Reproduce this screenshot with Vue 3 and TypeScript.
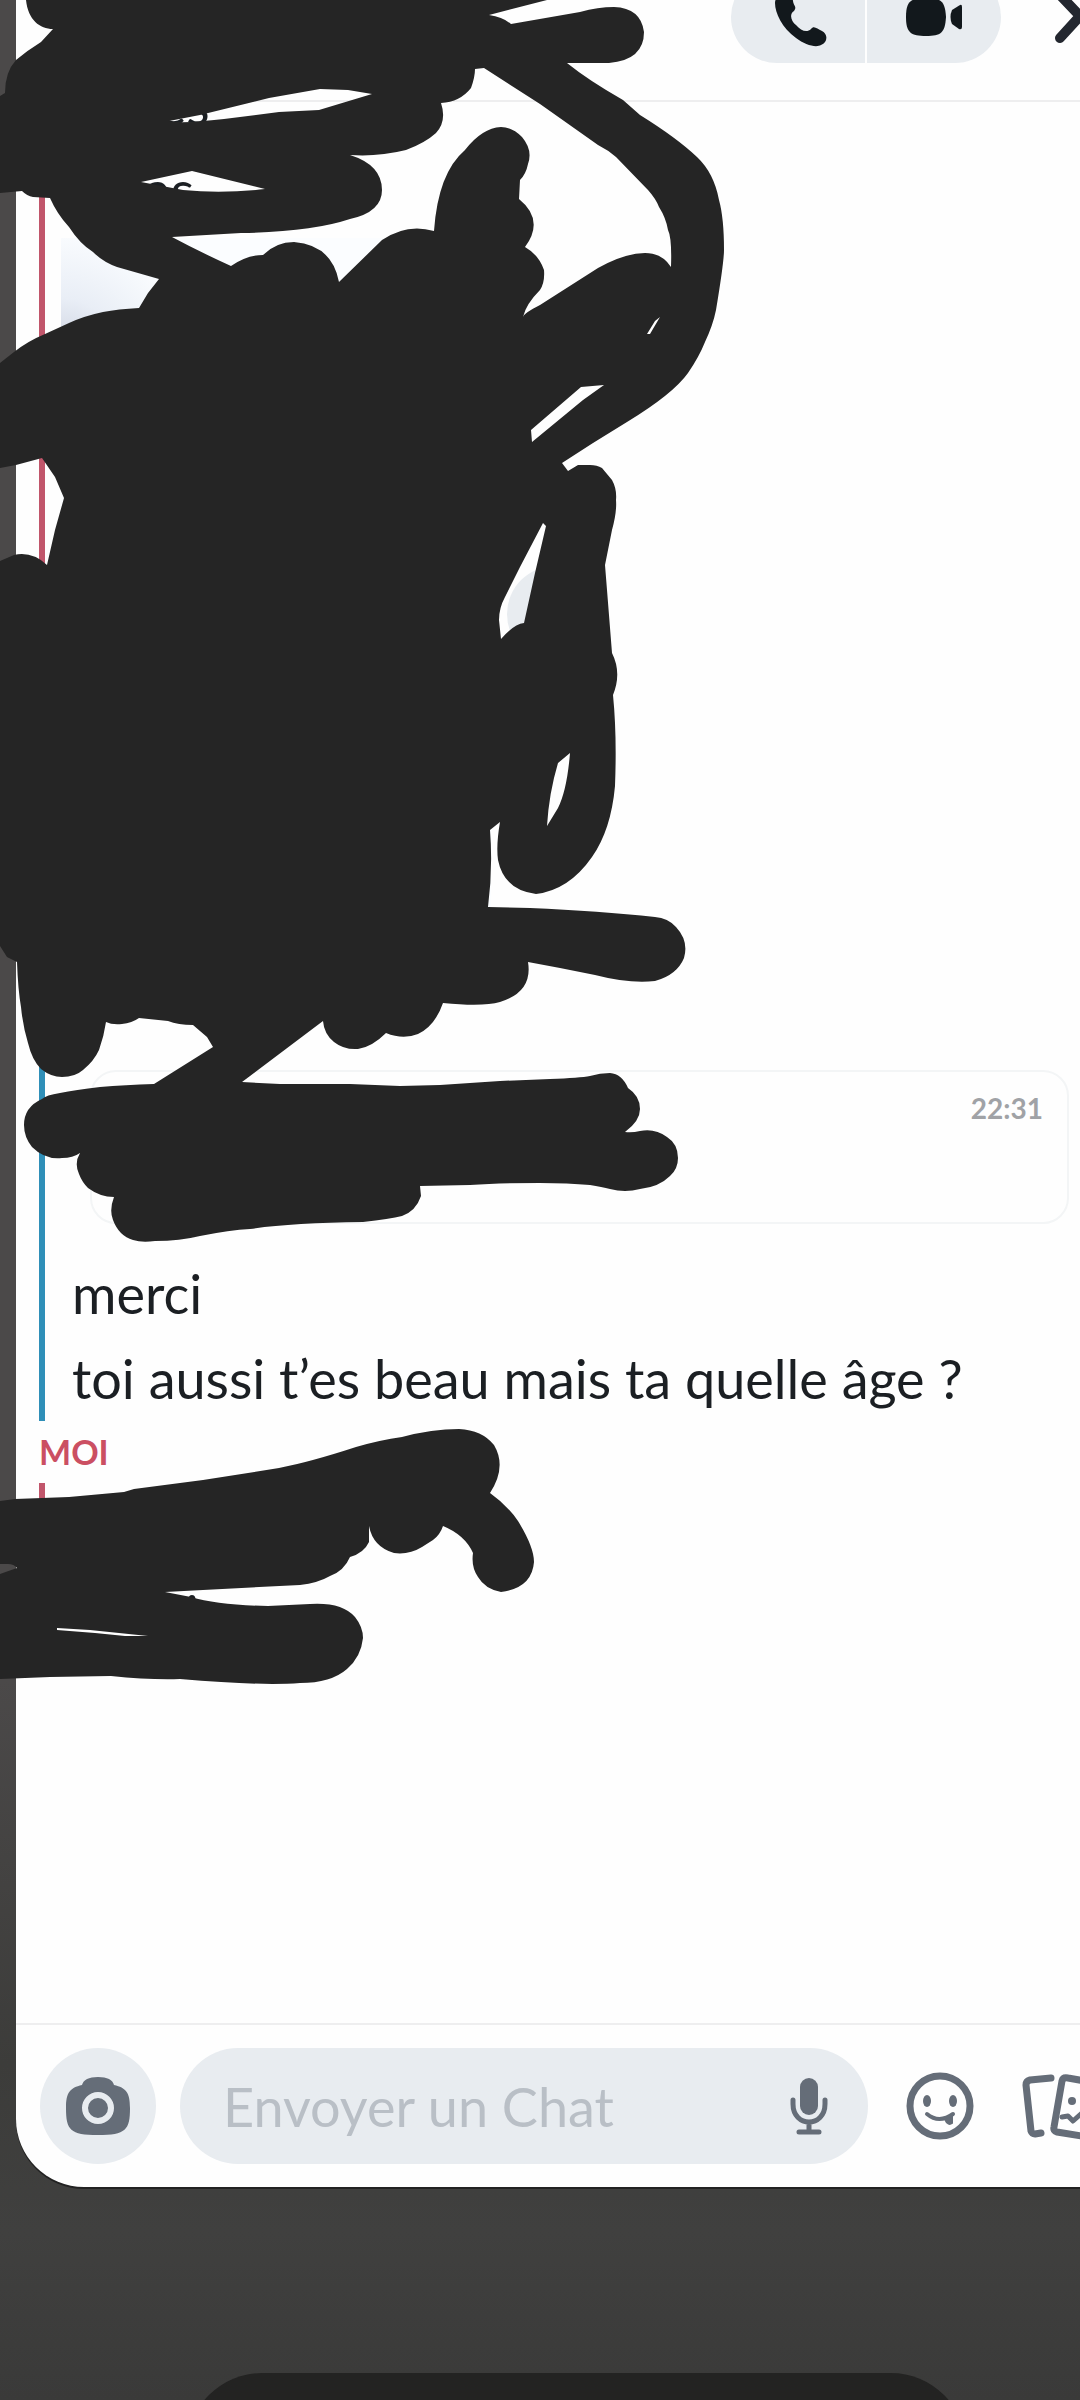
<script setup lang="ts">
import { ref } from 'vue'

const draft = ref('')
const replies: string[] = ['merci', 'toi aussi t’es beau mais ta quelle âge ?']
</script>

<template>
  <div class="screen">
    <main class="sheet">
      <header class="top">
        <div class="calls">
          <button type="button" aria-label="Appel audio">
            <svg width="60" height="60" viewBox="0 0 60 60">
              <path d="M12 8C17 5 24 6 25 14C26 20 29 19 26 24C21 27 23 34 28 38C33 44 39 46 43 42C46 38 49 42 54 44C60 47 60 55 53 58C48 61 37 58 28 51C14 41 7 26 7 16Q7 11 12 8Z" fill="#12181c" />
            </svg>
          </button>
          <button type="button" aria-label="Appel vidéo">
            <svg width="60" height="42" viewBox="0 0 60 42">
              <path d="M22 2C37 2 41 5 42 21C41 37 37 40 22 40C7 40 2 37 2 21C2 5 7 2 22 2Z" fill="#12181c" />
              <path d="M56 9Q58 8 58 11V31Q58 34 55 33L48 28Q45 21 48 14Z" fill="#12181c" />
            </svg>
          </button>
        </div>
        <button class="more" type="button" aria-label="Ouvrir">
          <svg width="48" height="60" viewBox="0 0 48 60">
            <path d="M6 8L26 29L6 51" fill="none" stroke="#23272f" stroke-width="10" stroke-linecap="round" stroke-linejoin="round" />
          </svg>
        </button>
      </header>

      <section class="thread">
        <div class="group mine first">
          <p class="line inset">&nbsp;es</p>
          <p class="line inset">as</p>
          <div class="snap">
            <div class="photo"></div>
            <span class="share"></span>
          </div>
        </div>
        <div class="group theirs">
          <div class="card"><time>22:31</time></div>
          <p v-for="text in replies" :key="text" class="line">{{ text }}</p>
        </div>
        <h2 class="author">MOI</h2>
        <div class="group mine last">
          <p class="line"></p>
          <p class="line inset">&nbsp;&nbsp;&nbsp;i</p>
        </div>
      </section>

      <form class="composer" @submit.prevent>
        <button class="camera" type="button" aria-label="Appareil photo">
          <svg width="64" height="60" viewBox="0 0 64 60">
            <path d="M16 9Q18 1 32 1Q46 1 48 9C60 12 64 16 64 32C64 54 60 59 32 59C4 59 0 54 0 32C0 16 4 12 16 9Z" fill="#656d78" />
            <circle cx="32" cy="32" r="13" fill="none" stroke="#e8ecf0" stroke-width="6" />
          </svg>
        </button>
        <div class="field">
          <input v-model="draft" type="text" aria-label="Message" placeholder="Envoyer un Chat" />
          <button type="button" aria-label="Dicter">
            <svg width="38" height="58" viewBox="0 0 38 58">
              <rect x="10" y="1" width="18" height="37" rx="9" fill="#656d78" />
              <path d="M3 23V27C3 51 35 51 35 27V23M19 46V55M9 55H29" fill="none" stroke="#656d78" stroke-width="5" stroke-linecap="round" />
            </svg>
          </button>
        </div>
        <button class="plain" type="button" aria-label="Émojis">
          <svg width="70" height="70" viewBox="0 0 70 70">
            <circle cx="35" cy="35" r="30" fill="none" stroke="#656d78" stroke-width="7" />
            <ellipse cx="22" cy="30" rx="4" ry="6" fill="#656d78" />
            <ellipse cx="48" cy="30" rx="4" ry="6" fill="#656d78" />
            <path d="M22 43Q34 53 48 43" fill="none" stroke="#656d78" stroke-width="4" stroke-linecap="round" />
            <path d="M47 44V52Q43 55 40 48Z" fill="#656d78" stroke="#656d78" stroke-width="2" />
          </svg>
        </button>
        <button class="plain stickers" type="button" aria-label="Stickers">
          <svg width="84" height="70" viewBox="0 0 84 70">
            <g fill="none" stroke="#656d78" stroke-width="7" stroke-linecap="round" stroke-linejoin="round">
              <path d="M29 7L8 9Q4 10 4 14L9 60Q10 63 13 63L19 62" />
              <path d="M46 7L80 13L72 67L35 61Q31 60 32 56L40 10Q41 6 46 7Z" />
              <path d="M40 46L46 45L51 50L60 42L68 48" stroke-width="5" />
            </g>
            <circle cx="50" cy="30" r="4" fill="#656d78" />
          </svg>
        </button>
      </form>
    </main>
    <footer class="dock"></footer>

    <!-- Marker strokes drawn over the conversation -->
    <svg class="marker" width="1080" height="1700" viewBox="0 0 1080 1700" aria-hidden="true">
      <g fill="#252525" fill-rule="evenodd">
        <path
          d="M26 0C28 20 40 29 53 29L41 42Q28 50 16 60Q5 72 5 93L0 96V193L22 191Q27 196 33 197L50 198Q57 214 69 227Q80 244 93 252Q103 262 117 267L159 279L148 293L139 308Q118 309 103 312Q84 316 69 323L45 334Q28 341 14 352L0 363V468L16 465L42 458L55 477L64 498L55 530L47 565Q32 551 14 555L0 561V946L7 957L17 962Q18 990 21 1007Q23 1027 28 1043Q32 1060 41 1069Q51 1077 62 1077Q75 1077 83 1070Q94 1061 99 1050Q104 1036 106 1022Q112 1025 122 1024Q132 1023 139 1018L168 1021Q178 1025 193 1025L207 1037L213 1047L154 1084Q125 1085 100 1087Q75 1090 60 1093Q46 1095 42 1099Q24 1107 24 1125Q24 1137 32 1147Q45 1160 62 1158Q73 1158 80 1153Q74 1163 79 1174Q82 1182 88 1188Q100 1197 114 1197Q109 1210 113 1220Q119 1236 133 1240Q142 1243 155 1241Q180 1241 200 1236Q230 1230 250 1229Q290 1223 363 1222Q390 1219 402 1216Q416 1211 421 1196L420 1186L470 1185Q500 1183 540 1183Q568 1183 590 1185Q602 1187 610 1189Q625 1193 640 1189Q659 1187 670 1176Q678 1169 678 1158Q678 1144 667 1137Q655 1128 640 1131Q632 1133 625 1132Q640 1121 640 1109Q640 1096 628 1088Q622 1074 610 1073Q600 1073 590 1076Q580 1078 550 1079L500 1081L440 1085L400 1086L350 1084H280L242 1082L323 1021Q324 1034 334 1042Q344 1050 358 1049Q372 1047 386 1033Q403 1040 418 1034Q435 1026 443 1003Q483 1007 500 1002Q533 992 528 962L560 968L595 975Q630 984 655 981Q677 975 684 958Q689 941 676 927Q668 918 655 917Q600 911 530 908L488 907Q493 868 490 830L500 822Q496 845 498 860Q504 890 536 894Q569 890 592 857Q611 830 615 786Q617 735 613 695Q622 673 612 653L607 590L605 565L612 530Q617 512 616 500Q617 489 612 480L602 468Q597 465 590 465H578L568 471L562 463L593 443L627 422Q673 394 688 373Q699 357 705 342Q713 325 716 310Q724 262 724 250Q724 218 719 200Q714 173 697 157Q677 138 640 115L623 100Q588 80 567 63H609Q644 60 644 32Q641 8 614 7Q598 7 580 12L511 24Q503 17 489 15L547 0Z
          M475 69Q475 77 471 88Q460 102 441 103Q447 121 436 133Q425 143 406 150Q378 157 350 155Q382 165 382 190Q382 212 350 219Q311 232 241 233L172 237Q198 251 231 266Q247 255 263 255Q276 242 294 242Q332 245 339 282L382 240Q407 223 434 231Q438 173 465 150Q482 128 501 127Q512 127 522 137Q533 150 528 164Q526 174 520 180L519 199Q545 220 525 247Q539 255 544 270Q545 282 540 290Q526 304 523 317Q524 313 540 305L598 268Q625 253 645 253Q662 253 671 267Q672 238 668 230Q666 218 659 207Q656 199 648 190L616 157Q608 150 598 145L540 104L484 68Z
          M169 121L200 115L269 98L320 89L348 90L372 94L319 110L279 112L224 119Q182 124 169 121Z
          M141 182L192 171L265 189Q222 194 183 190Z
          M531 430L581 387L604 385L583 400L532 442Z
          M543 523L546 526L535 573L524 623Q514 624 501 639L499 620Q499 608 505 597L520 567Z
          M570 753L558 763Q549 793 547 826L558 808Q567 790 570 753Z
          M647 334L655 321L660 317L650 334Z"
        />
        <path
          d="M0 1501L15 1499L69 1497L124 1492L134 1489L203 1480L279 1468Q310 1462 356 1447Q380 1440 402 1437Q432 1429 459 1429Q482 1430 494 1445Q507 1467 490 1493Q507 1505 518 1521Q534 1547 534 1562Q532 1588 501 1592Q485 1589 478 1577Q471 1567 473 1553Q465 1535 443 1526Q440 1535 433 1540L422 1547Q409 1555 394 1553Q373 1547 369 1526V1542Q364 1553 350 1557Q344 1571 330 1576Q318 1583 300 1585L203 1590L165 1592L191 1597Q218 1605 268 1606L310 1604Q342 1602 355 1617Q363 1627 363 1638Q361 1657 347 1669Q331 1683 300 1683Q260 1686 180 1679Q150 1680 111 1676L50 1677L0 1679V1574L17 1568Q14 1564 8 1564H0Z
          M57 1628L90 1630L148 1636L125 1636L95 1633L57 1630Z"
        />
      </g>
    </svg>
  </div>
</template>

<style>
html,
body {
  margin: 0;
  background: #3d3d3b;
}
</style>

<style scoped>
.screen {
  position: relative;
  display: flex;
  flex-direction: column;
  min-height: 100vh;
  overflow: hidden;
  background: linear-gradient(180deg, #4b4949 0%, #4b4949 70%, #3c3c3a 86%, #40403f 93%, #3a3a39 100%);
  color: #1b1f23;
  font-family: Lato, "Liberation Sans", sans-serif;
}
button {
  display: flex;
  align-items: center;
  justify-content: center;
  flex: none;
  margin: 0;
  padding: 0;
  border: 0;
  background: none;
}
svg {
  display: block;
  flex: none;
}
.sheet {
  display: flex;
  flex: 1;
  flex-direction: column;
  margin: 0 0 186px 16px;
  overflow: hidden;
  border-radius: 0 0 0 68px;
  background: #fefefe;
  box-shadow: 0 2px 0 #222;
}
.top {
  display: flex;
  flex: none;
  align-items: flex-end;
  justify-content: flex-end;
  gap: 53px;
  height: 63px;
  padding-bottom: 37px;
  border-bottom: 2px solid #eeeeef;
}
.calls {
  display: flex;
  gap: 2px;
  overflow: hidden;
  border-radius: 46px;
}
.calls button {
  width: 134px;
  height: 92px;
  background: #e8ecf0;
}
.more {
  width: 26px;
  height: 92px;
  justify-content: flex-start;
}
.thread {
  flex: 1;
  padding-left: 23px;
}
.group {
  padding-left: 27px;
  border-left: 6px solid;
}
.mine {
  border-color: #c1566b;
}
.theirs {
  padding-top: 21px;
  border-color: #2f8fb8;
}
.first {
  margin: -40px 0 53px;
}
.last {
  height: 176px;
  padding-top: 4px;
}
.line {
  min-height: 85px;
  margin: 0;
  font-size: 54px;
  line-height: 85px;
}
.inset {
  padding-left: 72px;
}
.snap {
  display: flex;
  align-items: center;
  gap: 16px;
  margin-left: -11px;
  padding: 6px 0;
}
.photo {
  width: 430px;
  height: 752px;
  background: radial-gradient(circle at 0 16%, #c9cfdd 0, #e9eef6 60px, #fbfdff 130px);
}
.share {
  width: 96px;
  height: 96px;
  border-radius: 50%;
  background: #e8ecf0;
}
.card {
  display: flex;
  justify-content: flex-end;
  box-sizing: border-box;
  height: 154px;
  margin: 0 11px 27px 18px;
  padding: 18px 24px;
  border: 2px solid #f3f5f6;
  border-radius: 26px;
  color: #a0a2a6;
  font-size: 28px;
  font-weight: 700;
  line-height: 36px;
}
.author {
  margin: 0;
  color: #cb4f62;
  font-size: 34px;
  font-weight: 700;
  line-height: 62px;
}
.composer {
  display: flex;
  flex: none;
  align-items: center;
  gap: 24px;
  padding: 23px 0 23px 24px;
  border-top: 2px solid #eeeeef;
}
.camera {
  width: 116px;
  height: 116px;
  border-radius: 50%;
  background: #e8ecf0;
}
.field {
  display: flex;
  flex: 1;
  align-items: center;
  min-width: 0;
  height: 116px;
  padding: 0 40px 0 43px;
  border-radius: 58px;
  background: #e8ecf0;
}
.field input {
  flex: 1;
  min-width: 0;
  padding: 0;
  border: 0;
  outline: 0;
  background: none;
  color: #1b1f23;
  font: inherit;
  font-size: 54px;
}
.field input::placeholder {
  color: #b9bfc6;
  opacity: 1;
}
.plain {
  width: 70px;
  margin-left: 13px;
}
.stickers {
  width: 58px;
  margin-left: 23px;
  justify-content: flex-start;
}
.dock {
  height: 75px;
  margin: 0 10.6% -48px 17.3%;
  border-radius: 75px 75px 0 0;
  background: #232322;
}
.marker {
  position: absolute;
  top: 0;
  left: 0;
  pointer-events: none;
}
</style>
